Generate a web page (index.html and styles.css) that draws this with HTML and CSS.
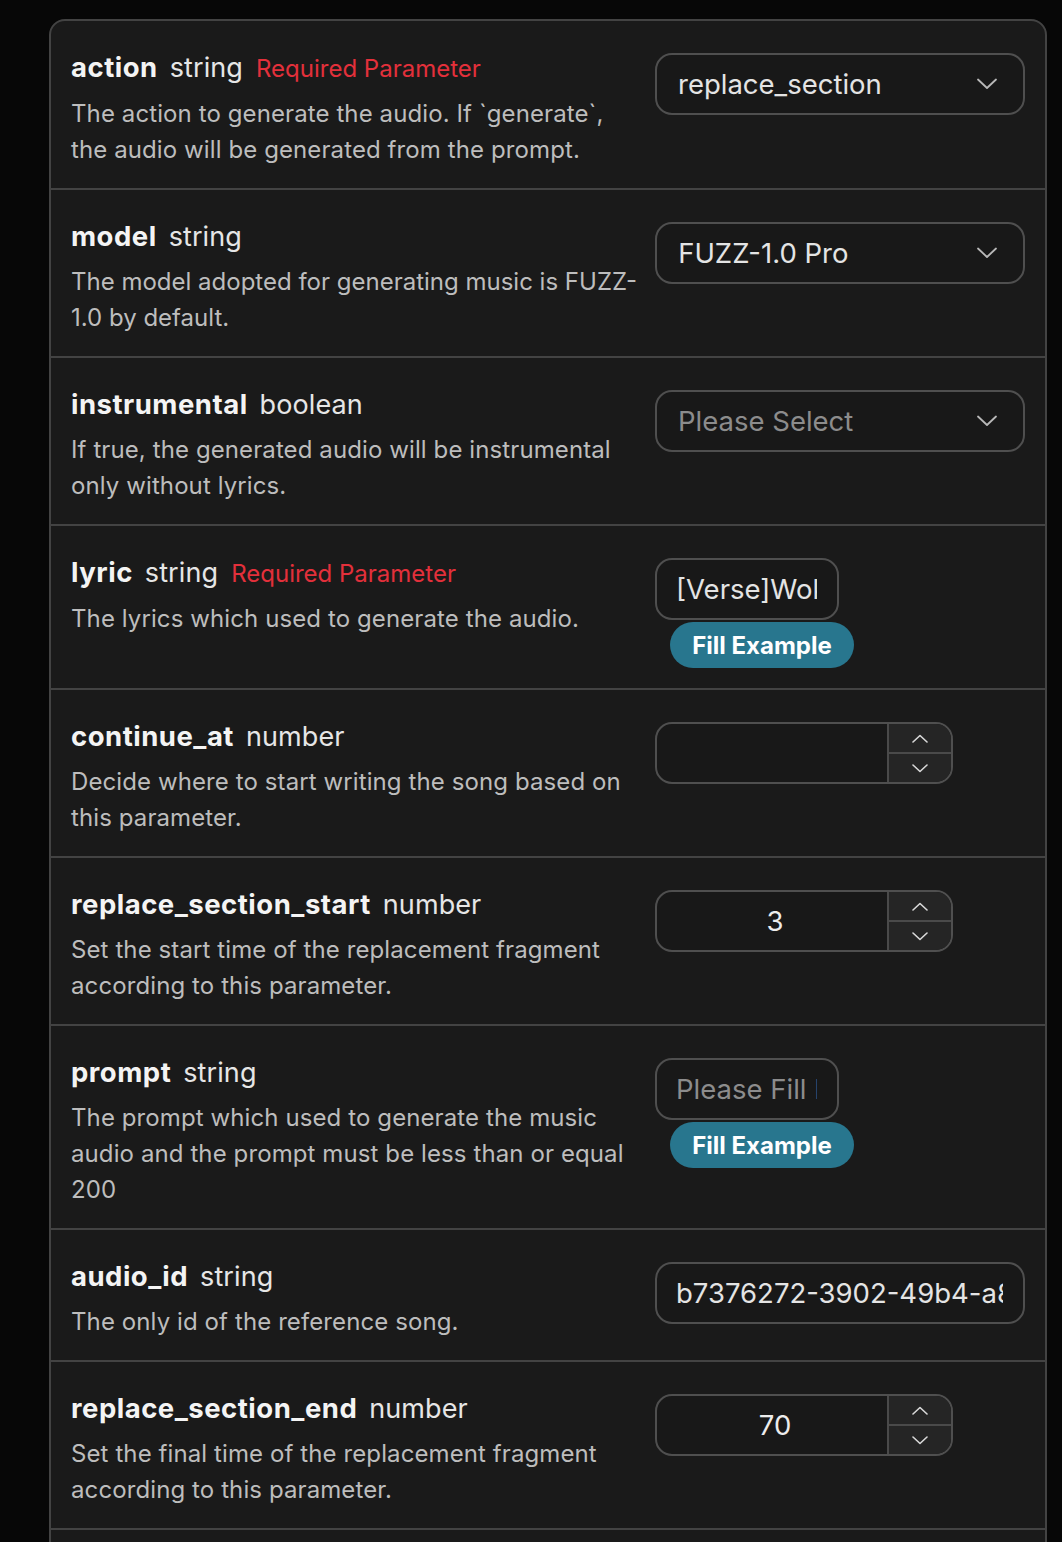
FILE: index.html
```html
<!DOCTYPE html>
<html lang="en">
<head>
<meta charset="utf-8">
<title>Parameters</title>
<link rel="stylesheet" href="styles.css">
</head>
<body>
<div class="card">

  <div class="row">
    <div class="info">
      <div class="head"><span class="name">action</span><span class="type">string</span><span class="req">Required Parameter</span></div>
      <p class="desc">The action to generate the audio. If `generate`, the audio will be generated from the prompt.</p>
    </div>
    <div class="control">
      <div class="select"><span class="sel-value">replace_section</span><svg class="chev" viewBox="0 0 20 12" width="20" height="12"><path d="M1 1.5 L10 10 L19 1.5" /></svg></div>
    </div>
  </div>

  <div class="row">
    <div class="info">
      <div class="head"><span class="name">model</span><span class="type">string</span></div>
      <p class="desc nowrap-lines">The model adopted for generating music is FUZZ-<br>1.0 by default.</p>
    </div>
    <div class="control">
      <div class="select"><span class="sel-value">FUZZ-1.0 Pro</span><svg class="chev" viewBox="0 0 20 12" width="20" height="12"><path d="M1 1.5 L10 10 L19 1.5" /></svg></div>
    </div>
  </div>

  <div class="row">
    <div class="info">
      <div class="head"><span class="name">instrumental</span><span class="type">boolean</span></div>
      <p class="desc">If true, the generated audio will be instrumental only without lyrics.</p>
    </div>
    <div class="control">
      <div class="select"><span class="sel-value placeholder">Please Select</span><svg class="chev" viewBox="0 0 20 12" width="20" height="12"><path d="M1 1.5 L10 10 L19 1.5" /></svg></div>
    </div>
  </div>

  <div class="row">
    <div class="info">
      <div class="head"><span class="name">lyric</span><span class="type">string</span><span class="req">Required Parameter</span></div>
      <p class="desc">The lyrics which used to generate the audio.</p>
    </div>
    <div class="control">
      <input class="text-input short" type="text" value="[Verse]Woke up in a city that's burning bright">
      <button class="fill-btn">Fill Example</button>
    </div>
  </div>

  <div class="row">
    <div class="info">
      <div class="head"><span class="name">continue_at</span><span class="type">number</span></div>
      <p class="desc">Decide where to start writing the song based on this parameter.</p>
    </div>
    <div class="control">
      <div class="number">
        <input class="num-input" type="text" value="">
        <div class="stepper">
          <div class="step"><svg viewBox="0 0 16 9" width="16" height="9"><path d="M1 8 L8 1.5 L15 8"/></svg></div>
          <div class="step"><svg viewBox="0 0 16 9" width="16" height="9"><path d="M1 1 L8 7.5 L15 1"/></svg></div>
        </div>
      </div>
    </div>
  </div>

  <div class="row">
    <div class="info">
      <div class="head"><span class="name">replace_section_start</span><span class="type">number</span></div>
      <p class="desc">Set the start time of the replacement fragment according to this parameter.</p>
    </div>
    <div class="control">
      <div class="number">
        <input class="num-input" type="text" value="3">
        <div class="stepper">
          <div class="step"><svg viewBox="0 0 16 9" width="16" height="9"><path d="M1 8 L8 1.5 L15 8"/></svg></div>
          <div class="step"><svg viewBox="0 0 16 9" width="16" height="9"><path d="M1 1 L8 7.5 L15 1"/></svg></div>
        </div>
      </div>
    </div>
  </div>

  <div class="row">
    <div class="info">
      <div class="head"><span class="name">prompt</span><span class="type">string</span></div>
      <p class="desc">The prompt which used to generate the music audio and the prompt must be less than or equal 200</p>
    </div>
    <div class="control">
      <input class="text-input short" type="text" placeholder="Please Fill In">
      <button class="fill-btn">Fill Example</button>
    </div>
  </div>

  <div class="row">
    <div class="info">
      <div class="head"><span class="name">audio_id</span><span class="type">string</span></div>
      <p class="desc">The only id of the reference song.</p>
    </div>
    <div class="control">
      <input class="text-input" type="text" value="b7376272-3902-49b4-a8b2-4f3a2c1d9e07">
    </div>
  </div>

  <div class="row">
    <div class="info">
      <div class="head"><span class="name">replace_section_end</span><span class="type">number</span></div>
      <p class="desc">Set the final time of the replacement fragment according to this parameter.</p>
    </div>
    <div class="control">
      <div class="number">
        <input class="num-input" type="text" value="70">
        <div class="stepper">
          <div class="step"><svg viewBox="0 0 16 9" width="16" height="9"><path d="M1 8 L8 1.5 L15 8"/></svg></div>
          <div class="step"><svg viewBox="0 0 16 9" width="16" height="9"><path d="M1 1 L8 7.5 L15 1"/></svg></div>
        </div>
      </div>
    </div>
  </div>

  <div class="row-tail"></div>

</div>
</body>
</html>
```

FILE: styles.css
```css
* { box-sizing: border-box; }

html, body {
  margin: 0;
  padding: 0;
  background: #070707;
  height: 1542px;
  overflow: hidden;
}

body {
  font-family: Inter, "Noto Sans", "Liberation Sans", sans-serif;
  color: #e8e8e8;
  padding-top: 19px;
}

.card {
  margin-left: 49px;
  width: 998px;
  background: #1a1a1a;
  border: 2px solid #434343;
  border-radius: 16px;
}

.row {
  display: grid;
  grid-template-columns: 1fr 370px;
  column-gap: 18px;
  align-items: start;
  padding: 28px 20px 20px 20px;
  border-bottom: 2px solid #434343;
}

.row-tail {
  height: 60px;
}

.head {
  display: flex;
  align-items: baseline;
  gap: 12px;
  line-height: 36px;
  white-space: nowrap;
}

.name {
  font-size: 27.5px;
  font-weight: 700;
  color: #f4f4f4;
  letter-spacing: 0.5px;
}

.type {
  font-size: 27px;
  font-weight: 400;
  color: #e6e6e6;
  letter-spacing: 0.1px;
}

.req {
  font-size: 24px;
  color: #e3303b;
  margin-left: 1px;
}

.desc {
  margin: 9px 0 0 0;
  font-size: 24px;
  line-height: 36px;
  color: #bdbdbd;
  letter-spacing: 0.1px;
}

.desc.nowrap-lines {
  white-space: nowrap;
  letter-spacing: 0;
}

.control {
  margin-top: 4px;
  display: flex;
  flex-direction: column;
  align-items: flex-start;
}

.select {
  width: 370px;
  height: 62px;
  border: 2px solid #4f4f4f;
  border-radius: 17px;
  background: #181818;
  display: flex;
  align-items: center;
  justify-content: space-between;
  padding: 0 26px 0 21px;
}

.sel-value {
  font-size: 27.5px;
  color: #e4e4e4;
}

.sel-value.placeholder { color: #8c8c8c; }

.chev path {
  fill: none;
  stroke: #b8b8b8;
  stroke-width: 1.8;
  stroke-linecap: round;
  stroke-linejoin: round;
}

.text-input {
  width: 370px;
  height: 62px;
  border: 2px solid #4f4f4f;
  border-radius: 17px;
  background: #181818;
  color: #e4e4e4;
  font-family: Inter, "Noto Sans", "Liberation Sans", sans-serif;
  font-size: 27.5px;
  padding: 0 20px 0 19px;
  outline: none;
}

.text-input.short { width: 184px; }

.text-input::placeholder { color: #8c8c8c; }

.fill-btn {
  margin: 2px 0 0 15px;
  width: 184px;
  height: 46px;
  border: none;
  border-radius: 23px;
  background: #28768e;
  color: #ffffff;
  font-family: Inter, "Noto Sans", "Liberation Sans", sans-serif;
  font-size: 24px;
  font-weight: 650;
  padding: 0;
}

.number {
  width: 298px;
  height: 62px;
  border: 2px solid #4f4f4f;
  border-radius: 17px;
  background: #181818;
  display: flex;
  overflow: hidden;
}

.num-input {
  flex: 1;
  min-width: 0;
  border: none;
  background: transparent;
  color: #ececec;
  font-family: Inter, "Noto Sans", "Liberation Sans", sans-serif;
  font-size: 27.5px;
  text-align: center;
  outline: none;
  padding: 0 0 0 6px;
}

.stepper {
  width: 64px;
  border-left: 2px solid #4a4a4a;
  background: #252525;
  display: flex;
  flex-direction: column;
}

.step {
  flex: 1;
  display: flex;
  align-items: center;
  justify-content: center;
}

.step + .step { border-top: 2px solid #4a4a4a; }

.step path {
  fill: none;
  stroke: #d8d8d8;
  stroke-width: 1.6;
  stroke-linecap: round;
  stroke-linejoin: round;
}
```
